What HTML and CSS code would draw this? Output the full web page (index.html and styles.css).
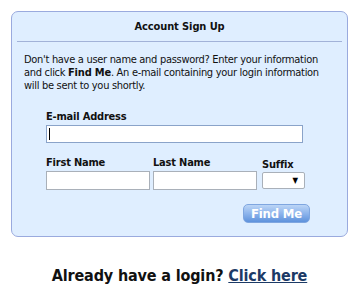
FILE: index.html
```html
<!DOCTYPE html>
<html>
<head>
<meta charset="utf-8">
<link rel="stylesheet" href="styles.css">
</head>
<body>
<div class="panel">
  <div class="panel-header">Account Sign Up</div>
  <p class="intro">Don't have a user name and password? Enter your information<br>and click <b>Find Me</b>. An e-mail containing your login information<br>will be sent to you shortly.</p>
  <div class="form">
    <div class="field">
      <label class="label">E-mail Address</label>
      <div class="input email"><span class="caret"></span></div>
    </div>
    <div class="name-row">
      <div class="field first">
        <label class="label">First Name</label>
        <div class="input name"></div>
      </div>
      <div class="field last">
        <label class="label">Last Name</label>
        <div class="input name"></div>
      </div>
      <div class="field suffix">
        <label class="label suffix-label">Suffix</label>
        <div class="select"><span class="arrow">▼</span></div>
      </div>
    </div>
    <div class="actions">
      <button class="btn" type="button">Find Me</button>
    </div>
  </div>
</div>
<p class="login">Already have a login? <a href="#" class="login-link">Click here</a></p>
</body>
</html>
```
FILE: styles.css
```css
html, body {
  margin: 0;
  padding: 0;
  background: #ffffff;
}
body {
  padding: 11px 0 0 11px;
  font-family: "DejaVu Sans Condensed", "DejaVu Sans", sans-serif;
  font-size: 11px;
  color: #111111;
}
.panel {
  box-sizing: border-box;
  width: 337px;
  height: 226px;
  background: #dfeeff;
  border: 1px solid #9aaade;
  border-radius: 7px;
}
.panel-header {
  margin: 0 5px;
  height: 29px;
  line-height: 29px;
  border-bottom: 1px solid #a2b2d8;
  text-align: center;
  font-weight: bold;
  letter-spacing: -0.1px;
}
.intro {
  margin: 11px 12px 0 12px;
  line-height: 13px;
  letter-spacing: -0.3px;
  white-space: nowrap;
}
.intro b {
  letter-spacing: -0.2px;
}
.form {
  margin: 18px 0 0 34px;
}
.field {
  display: flex;
  flex-direction: column;
}
.label {
  display: block;
  font-weight: bold;
  line-height: 13px;
  letter-spacing: -0.2px;
  margin-bottom: 2px;
}
.input {
  box-sizing: border-box;
  background: #ffffff;
  border: 1px solid #a9b0b9;
  height: 19px;
}
.email {
  width: 257px;
  height: 18px;
  border-color: #8aa3c9;
  position: relative;
}
.caret {
  position: absolute;
  left: 2px;
  top: 2px;
  width: 1px;
  height: 12px;
  background: #000000;
}
.name-row {
  display: flex;
  margin-top: 13px;
  align-items: flex-end;
}
.first { width: 104px; margin-right: 3px; }
.last { width: 104px; margin-right: 5px; }
.name { width: 104px; }
.suffix { width: 43px; }
.suffix-label { margin-bottom: 1px; }
.select {
  box-sizing: border-box;
  width: 43px;
  height: 17px;
  margin-bottom: 1px;
  background: #ffffff;
  border: 1px solid #a9b0b9;
  border-radius: 2px;
  display: flex;
  align-items: center;
  justify-content: flex-end;
  padding-right: 6px;
}
.arrow {
  font-size: 8px;
  line-height: 8px;
  color: #000000;
}
.actions {
  display: flex;
  justify-content: flex-end;
  width: 264px;
  margin-top: 14px;
}
.btn {
  box-sizing: border-box;
  width: 67px;
  height: 19px;
  padding: 0;
  border: 1px solid #7fa6e0;
  border-radius: 5px;
  background: linear-gradient(#bcd5f6, #8db4ec 50%, #5e92dc);
  color: #ffffff;
  font-family: "DejaVu Sans Condensed", "DejaVu Sans", sans-serif;
  font-weight: bold;
  font-size: 13px;
  line-height: 17px;
  letter-spacing: -0.2px;
}
.login {
  margin: 29px 0 0 0;
  width: 337px;
  text-align: center;
  font-size: 16px;
  line-height: 20px;
  font-weight: bold;
  letter-spacing: -0.15px;
  color: #111111;
}
.login-link {
  color: #1c3a66;
  text-decoration: underline;
}
```
